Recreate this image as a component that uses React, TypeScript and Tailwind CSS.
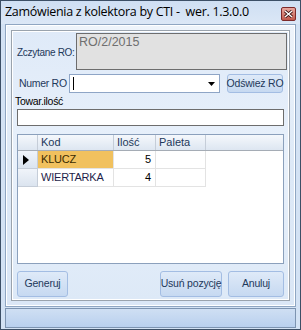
const ui = "font-['Liberation_Sans','Arial',sans-serif]";

function TitleBar() {
  return (
    <div className="flex h-[23px] items-center justify-between bg-gradient-to-b from-[#cfdff3] to-[#dbe7f6] pl-[4px] pr-[4px]">
      <span className="whitespace-nowrap font-['Open_Sans',sans-serif] text-[12.5px] leading-none tracking-[-0.3px] text-black">
        Zamówienia z kolektora by CTI -&nbsp; wer. 1.3.0.0
      </span>
      <div className="mt-[2px] flex h-[14px] w-[15px] items-center justify-center rounded-[2px] border border-[#7d2a2a] bg-gradient-to-b from-[#e8a8a0] to-[#c0584c]">
        <svg width="9" height="8" viewBox="0 0 9 8">
          <path d="M1 1 L8 7 M8 1 L1 7" stroke="#3a1010" strokeWidth="3" />
          <path d="M1 1 L8 7 M8 1 L1 7" stroke="#ffffff" strokeWidth="1.4" />
        </svg>
      </div>
    </div>
  );
}

function Button({ label, className }: { label: string; className: string }) {
  return (
    <button
      type="button"
      className={`flex items-center justify-center whitespace-nowrap rounded-[3px] border border-[#a3bde3] bg-gradient-to-b from-[#dfeaf8] to-[#c6d9f1] text-[10.5px] tracking-[-0.2px] text-[#1e395b] ${className}`}
    >
      {label}
    </button>
  );
}

const rows = [
  { kod: "KLUCZ", ilosc: 5, current: true },
  { kod: "WIERTARKA", ilosc: 4, current: false },
];

function Grid() {
  return (
    <div className="mx-[4px] h-[130px] border border-[#8ba0bc] bg-white">
      <div className="flex h-[16px] border-b border-[#a5acb5] bg-gradient-to-b from-[#f5f8fc] to-[#dde6f1] text-[11px] text-[#1e395b]">
        <div className="w-[20px] border-r border-[#c5cdd8]" />
        <div className="w-[76px] border-r border-[#c5cdd8] pl-[3px] leading-[15px]">Kod</div>
        <div className="w-[42px] border-r border-[#c5cdd8] pl-[3px] leading-[15px]">Ilość</div>
        <div className="w-[50px] border-r border-[#c5cdd8] pl-[3px] leading-[15px]">Paleta</div>
      </div>
      {rows.map((r) => (
        <div key={r.kod} className="flex h-[18px] text-[11px] text-black">
          <div className="flex w-[20px] items-center border-b border-r border-[#c5cdd8] bg-gradient-to-b from-[#f0f4fa] to-[#dbe4ef] pl-[5px]">
            {r.current && (
              <svg width="6" height="10" viewBox="0 0 6 10">
                <path d="M0 0 L6 5 L0 10 Z" fill="#000" />
              </svg>
            )}
          </div>
          <div
            className={`flex w-[76px] items-center border-b border-r border-[#e3e3e3] pl-[3px] tracking-[-0.2px] ${
              r.current ? "bg-[#f1c15e] text-[#3a2b00]" : "text-[#1e1e4a]"
            }`}
          >
            {r.kod}
          </div>
          <div className="flex w-[42px] items-center justify-end border-b border-r border-[#e3e3e3] pr-[4px]">
            {r.ilosc}
          </div>
          <div className="w-[50px] border-b border-r border-[#e3e3e3]" />
        </div>
      ))}
    </div>
  );
}

export default function App() {
  return (
    <div className={`${ui} h-[330px] w-[301px] border border-[#3c4f66] bg-[#d3e2f4]`}>
      <TitleBar />
      <div className="mx-[4px] flex h-[283px] flex-col border border-[#8fa6c2] bg-white p-[1px]">
        <div className="flex flex-1 flex-col bg-gradient-to-b from-[#eef4fb] via-[#dde9f7] to-[#dbe7f6] p-[4px]">
          <div className="flex flex-1 flex-col border border-[#9aa3ad] bg-white p-[1px]">
            <div className="flex flex-1 flex-col bg-gradient-to-b from-[#dfeaf8] via-[#e9f1fb] to-[#dde9f7] pt-[1px]">
              <div className="flex gap-[4px] pl-[4px] pr-[1px]">
                <span className="mt-[12px] w-[55px] whitespace-nowrap text-[10px] tracking-[-0.3px] text-[#1e395b]">
                  Zczytane RO:
                </span>
                <div className="h-[37px] flex-1 border border-[#6d6d6d] bg-[#e1e1e1] pl-[2px] text-[12.5px] leading-[17px] text-[#6f6f6f]">
                  RO/2/2015
                </div>
              </div>
              <div className="mt-[4px] flex items-center pl-[6px] pr-[3px]">
                <span className="w-[50px] whitespace-nowrap text-[10.5px] tracking-[-0.3px] text-[#1e395b]">Numer RO</span>
                <div className="flex h-[19px] w-[151px] items-center justify-between border border-[#8ea5c6] bg-white pl-[3px] pr-[4px]">
                  <div className="h-[13px] w-[1px] bg-black" />
                  <svg width="7" height="4" viewBox="0 0 7 4">
                    <path d="M0 0 H7 L3.5 4 Z" fill="#000" />
                  </svg>
                </div>
                <Button label="Odśwież RO" className="ml-[7px] h-[19px] w-[56px]" />
              </div>
              <span className="mt-[1px] whitespace-nowrap pl-[2px] text-[10.5px] leading-[14px] tracking-[-0.3px] text-black">
                Towar.ilość
              </span>
              <div className="mx-[4px] mt-[1px] h-[17px] border border-[#6d6d6d] bg-white" />
              <div className="mt-[8px]">
                <Grid />
              </div>
              <div className="mt-[7px] flex px-[4px]">
                <Button label="Generuj" className="h-[26px] w-[51px]" />
                <Button label="Usuń pozycję" className="ml-auto h-[26px] w-[62px]" />
                <Button label="Anuluj" className="ml-[6px] h-[26px] w-[56px]" />
              </div>
            </div>
          </div>
        </div>
      </div>
      <div className="mx-[4px] mt-[1px] h-[20px] border border-[#7d94b1] bg-gradient-to-b from-[#cfdff3] to-[#b9d0ee]" />
    </div>
  );
}
